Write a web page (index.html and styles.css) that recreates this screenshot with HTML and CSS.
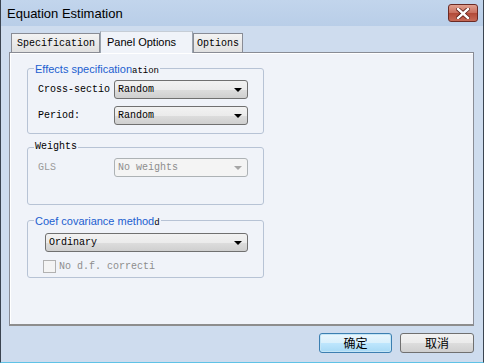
FILE: index.html
```html
<!DOCTYPE html>
<html lang="en">
<head>
    <meta charset="UTF-8">
    <title>Equation Estimation</title>
    <link rel="stylesheet" href="styles.css">
</head>
<body>
    <div class="window">
        <div class="titlebar">
            <div class="title">Equation Estimation</div>
            <div class="close-btn">
                <svg width="14" height="11" viewBox="0 0 14 11">
                    <path d="M2 1 L12 10 M12 1 L2 10" stroke="#5a1a14" stroke-width="4" stroke-linecap="square"/>
                    <path d="M2 1 L12 10 M12 1 L2 10" stroke="#fff" stroke-width="2.4" stroke-linecap="square"/>
                </svg>
            </div>
        </div>

        <div class="tabs">
            <div class="tab">Specification</div>
            <div class="tab active">Panel Options</div>
            <div class="tab tab-small">Options</div>
        </div>

        <div class="panel">
            <fieldset class="group group-effects">
                <legend><span class="blue">Effects specification</span><span class="ghost">ation</span></legend>
                <div class="row">
                    <span class="label">Cross-sectio</span>
                    <div class="combo">Random<span class="arrow"></span></div>
                </div>
                <div class="row">
                    <span class="label">Period:</span>
                    <div class="combo">Random<span class="arrow"></span></div>
                </div>
            </fieldset>

            <fieldset class="group group-weights">
                <legend class="mono">Weights</legend>
                <div class="row">
                    <span class="label disabled-text">GLS</span>
                    <div class="combo disabled">No weights<span class="arrow"></span></div>
                </div>
            </fieldset>

            <fieldset class="group group-coef">
                <legend><span class="blue">Coef covariance method</span><span class="ghost">d</span></legend>
                <div class="combo wide">Ordinary<span class="arrow"></span></div>
                <div class="check-row">
                    <span class="checkbox"></span>
                    <span class="check-label">No d.f. correcti</span>
                </div>
            </fieldset>
        </div>

        <div class="footer">
            <button class="btn default">确定</button>
            <button class="btn">取消</button>
        </div>
    </div>
</body>
</html>
```

FILE: styles.css
```css
body {
    margin: 0;
    width: 484px;
    height: 363px;
    overflow: hidden;
}
.window {
    box-sizing: border-box;
    width: 484px;
    height: 363px;
    background-color: #cedcee;
    border-left: 1px solid #3b4450;
    border-right: 1px solid #3b4450;
    border-bottom: 1px solid #5fc2e6;
    display: flex;
    flex-direction: column;
}
.titlebar {
    height: 26px;
    display: flex;
    align-items: flex-start;
    background: linear-gradient(#c2d5ec, #b9cee8);
}
.title {
    font-family: "Liberation Sans", Arial, sans-serif;
    font-size: 13px;
    color: #000;
    margin-left: 6px;
    margin-top: 6px;
}
.close-btn {
    margin-left: auto;
    margin-right: 5px;
    margin-top: 4px;
    width: 28px;
    height: 16px;
    border: 1px solid #6b2a24;
    border-radius: 3px;
    background: linear-gradient(#e0a090, #c9705f 48%, #b24a38 52%, #c66a57);
    display: flex;
    align-items: center;
    justify-content: center;
}

/* tabs */
.tabs {
    display: flex;
    align-items: flex-end;
    margin-top: 5px;
    padding-left: 10px;
    height: 21px;
    position: relative;
    z-index: 1;
}
.tab {
    box-sizing: border-box;
    width: 89px;
    height: 19px;
    border: 1px solid #898c95;
    border-bottom: none;
    background: linear-gradient(#f3f3f3, #e0e0e0);
    font-family: "Liberation Mono", "Courier New", monospace;
    font-size: 10px;
    padding: 4px 0 0 5px;
    color: #000;
}
.tab.active {
    width: 93px;
    height: 22px;
    margin-bottom: -1px;
    background: #f0f3f9;
    font-family: "Liberation Sans", Arial, sans-serif;
    font-size: 11px;
    padding: 4px 0 0 6px;
    border-color: #9aa3ae;
    border-top-color: #c6cdd6;
}
.tab-small {
    width: 50px;
    padding-left: 3px;
}

/* panel */
.panel {
    box-sizing: border-box;
    margin-left: 8px;
    width: 465px;
    height: 274px;
    background: #f0f3f9;
    border: 1px solid #898c95;
    border-bottom: 2px solid #8d8d8d;
    box-shadow: inset 1px 1px 0 #fff;
    padding: 8px 0 0 17px;
}
.group {
    box-sizing: border-box;
    width: 237px;
    margin: 0;
    border: 1px solid #b7c3d5;
    border-radius: 3px;
    padding: 0;
}
.group legend {
    margin-left: -4px;
    padding: 0 1px;
    height: 14px;
    line-height: 14px;
    white-space: nowrap;
}
.group-coef legend {
    margin-left: -11px;
}
.blue {
    font-family: "Liberation Sans", Arial, sans-serif;
    font-size: 11px;
    color: #1c5fd0;
}
.ghost {
    font-family: "Liberation Mono", monospace;
    font-size: 9px;
    color: #000;
}
.mono {
    font-family: "Liberation Mono", "Courier New", monospace;
    font-size: 10px;
    color: #000;
}
.group-effects {
    padding: 5px 0 8px 10px;
}
.group-weights {
    margin-top: 6px;
    padding: 4px 0 27px 10px;
}
.group-coef {
    margin-top: 8px;
    padding: 6px 0 4px 17px;
}
.row {
    display: flex;
    align-items: center;
    height: 19px;
}
.row + .row {
    margin-top: 7px;
}
.label {
    width: 76px;
    font-family: "Liberation Mono", "Courier New", monospace;
    font-size: 10px;
    color: #000;
}
.disabled-text {
    color: #9a9a9a;
}
.combo {
    box-sizing: border-box;
    width: 134px;
    height: 19px;
    border: 1px solid #707070;
    border-radius: 3px;
    background: linear-gradient(#f2f2f2 0%, #ebebeb 50%, #dddddd 51%, #cfcfcf 100%);
    font-family: "Liberation Mono", "Courier New", monospace;
    font-size: 10px;
    color: #000;
    padding: 3px 0 0 3px;
    display: flex;
    align-items: flex-start;
}
.combo.wide {
    width: 203px;
}
.arrow {
    margin-left: auto;
    margin-right: 5px;
    margin-top: 4px;
    width: 0;
    height: 0;
    border-left: 4px solid transparent;
    border-right: 4px solid transparent;
    border-top: 4px solid #000;
}
.combo.disabled {
    background: #f4f4f4;
    border-color: #adb2b5;
    color: #8d8d8d;
}
.combo.disabled .arrow {
    border-top-color: #a6a6a6;
}
.check-row {
    display: flex;
    align-items: center;
    margin-top: 8px;
    margin-left: -2px;
}
.checkbox {
    box-sizing: border-box;
    width: 13px;
    height: 13px;
    border: 1px solid #b1b1b1;
    background: #f4f4f4;
}
.check-label {
    margin-left: 3px;
    font-family: "Liberation Mono", "Courier New", monospace;
    font-size: 10px;
    color: #8d8d8d;
}

/* footer buttons */
.footer {
    display: flex;
    justify-content: flex-end;
    gap: 8px;
    padding: 7px 9px 0 0;
}
.btn {
    box-sizing: border-box;
    width: 73px;
    height: 20px;
    border: 1px solid #707070;
    border-radius: 3px;
    background: linear-gradient(#f2f2f2 0%, #ebebeb 50%, #dddddd 51%, #cfcfcf 100%);
    font-family: "Noto Sans CJK SC", sans-serif;
    font-size: 12px;
    line-height: 16px;
    padding: 0;
    color: #000;
}
.btn + .btn {
    width: 74px;
}
.btn.default {
    border-color: #3c7fb1;
    background: linear-gradient(#eaf6fd 0%, #d9f0fc 50%, #bee6fd 51%, #a7d9f5 100%);
    box-shadow: inset 0 0 0 1px #c4e5f6;
}
```
